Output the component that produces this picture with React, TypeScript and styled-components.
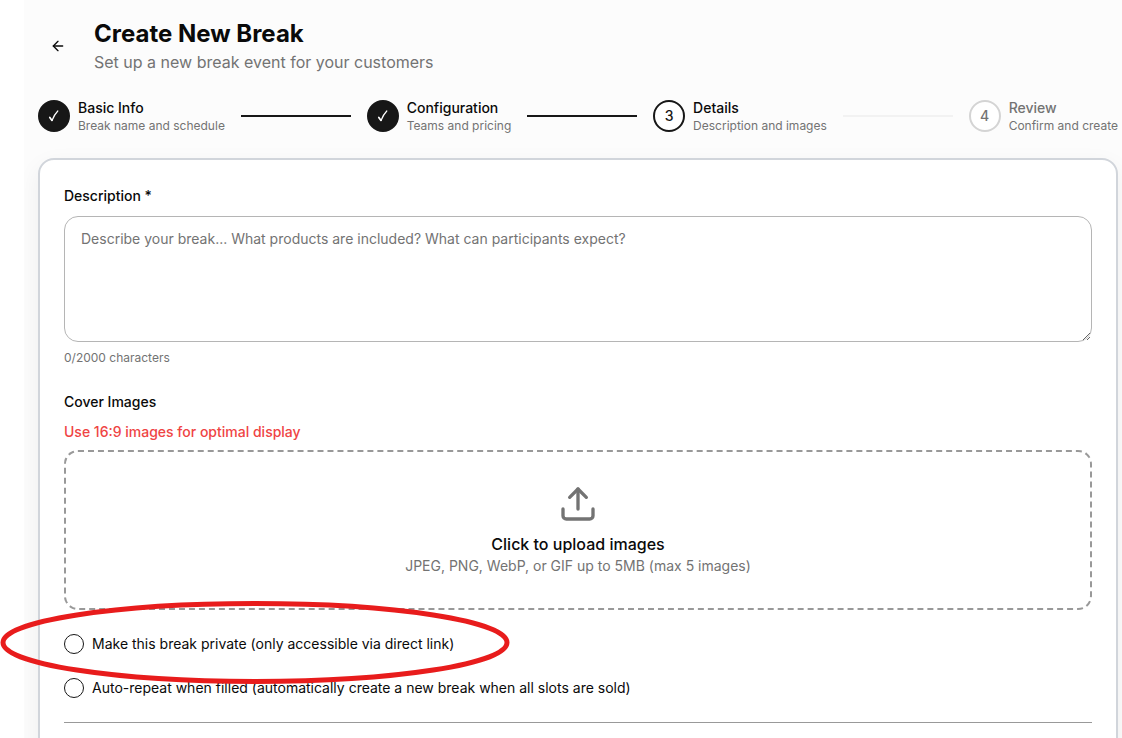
import React, { useId, useState } from "react";
import styled, { createGlobalStyle } from "styled-components";
import { ArrowLeft } from "lucide-react";

type StepState = "done" | "current" | "upcoming";

const GlobalStyle = createGlobalStyle`
  *, *::before, *::after { box-sizing: border-box; }
  body {
    margin: 0;
    background: #ffffff;
    color: #0a0a0a;
    font-family: Inter, "Liberation Sans", sans-serif;
    font-size: 14px;
    line-height: 20px;
  }
  h1, p, ol { margin: 0; padding: 0; }
  button, input, textarea { font: inherit; color: inherit; }
`;

const Shell = styled.div`
  position: relative;
  padding-left: 24px;
  height: 100vh;
  overflow: hidden;
`;

const Page = styled.main`
  background: #fcfcfc;
  min-height: 100%;
  padding: 18px 4px 0 14px;
  overflow: hidden;
`;

const Header = styled.header`
  display: flex;
  align-items: center;
  gap: 16px;
`;

const BackButton = styled.button`
  display: grid;
  place-items: center;
  width: 40px;
  height: 36px;
  padding: 0;
  border: 0;
  border-radius: 10px;
  background: transparent;
  cursor: pointer;
`;

const Title = styled.h1`
  font-size: 24px;
  line-height: 32px;
  font-weight: 700;
`;

const Subtitle = styled.p`
  font-size: 16px;
  line-height: 24px;
  color: #737373;
`;

const Stepper = styled.ol`
  display: flex;
  align-items: center;
  gap: 16px;
  margin: 24px 0;
  list-style: none;
`;

const StepItem = styled.li`
  display: flex;
  align-items: center;
  gap: 8px;
  white-space: nowrap;
`;

const Connector = styled.li<{ $done: boolean }>`
  flex: 1;
  height: 2px;
  background: ${({ $done }) => ($done ? "#171717" : "#f2f2f2")};
`;

const circleColors = {
  done: { border: "#171717", background: "#171717", text: "#ffffff" },
  current: { border: "#171717", background: "#ffffff", text: "#171717" },
  upcoming: { border: "#d4d4d4", background: "#ffffff", text: "#737373" },
};

const StepCircle = styled.span<{ $state: StepState }>`
  display: grid;
  place-items: center;
  flex: none;
  width: 32px;
  height: 32px;
  border-radius: 50%;
  border: 2px solid ${({ $state }) => circleColors[$state].border};
  background: ${({ $state }) => circleColors[$state].background};
  color: ${({ $state }) => circleColors[$state].text};
  font-weight: 500;
`;

const StepTitle = styled.div<{ $muted: boolean }>`
  line-height: 20px;
  font-weight: 500;
  color: ${({ $muted }) => ($muted ? "#737373" : "#0a0a0a")};
`;

const Hint = styled.p`
  font-size: 12px;
  line-height: 16px;
  color: #737373;
`;

const Card = styled.form`
  padding: 24px;
  min-height: 640px;
  border: 2px solid #d1d5db;
  border-radius: 16px;
  background: #ffffff;
  box-shadow: 0 8px 24px rgba(0, 0, 0, 0.06);
`;

const Field = styled.div`
  display: flex;
  flex-direction: column;
  gap: 8px;
  margin-bottom: 24px;
`;

const Label = styled.label`
  line-height: 24px;
  font-weight: 500;
`;

const TextArea = styled.textarea`
  display: block;
  width: 100%;
  height: 126px;
  padding: 12px 16px;
  border: 1px solid #b5b5b5;
  border-radius: 14px;
  background: #ffffff;
  resize: vertical;
  &::placeholder { color: #737373; opacity: 1; }
`;

const Warning = styled.p`
  line-height: 20px;
  font-weight: 500;
  color: #ef4444;
`;

const DropZone = styled.button`
  display: flex;
  flex-direction: column;
  align-items: center;
  width: 100%;
  padding: 32px;
  border: 2px dashed #999999;
  border-radius: 14px;
  background: #ffffff;
  cursor: pointer;
`;

const DropTitle = styled.span`
  margin-top: 8px;
  font-size: 16px;
  line-height: 24px;
  font-weight: 500;
`;

const DropHint = styled.span`
  line-height: 20px;
  color: #737373;
`;

const Options = styled.div`
  display: flex;
  flex-direction: column;
  gap: 24px;
  padding-bottom: 24px;
  border-bottom: 1px solid #999999;
`;

const Option = styled.label`
  display: flex;
  align-items: center;
  gap: 8px;
`;

const RoundCheck = styled.input`
  appearance: none;
  flex: none;
  width: 20px;
  height: 20px;
  margin: 0;
  border: 1px solid #171717;
  border-radius: 50%;
  background: #ffffff;
  &:checked { background: #171717; box-shadow: inset 0 0 0 4px #ffffff; }
`;

const Highlight = styled.svg`
  position: absolute;
  left: 0;
  top: 600px;
  pointer-events: none;
`;

const steps: { title: string; hint: string; state: StepState }[] = [
  { title: "Basic Info", hint: "Break name and schedule", state: "done" },
  { title: "Configuration", hint: "Teams and pricing", state: "done" },
  { title: "Details", hint: "Description and images", state: "current" },
  { title: "Review", hint: "Confirm and create", state: "upcoming" },
];

const CheckMark = () => (
  <svg width="12" height="14" viewBox="0 0 12 14" fill="none" stroke="currentColor" strokeLinecap="round" strokeLinejoin="round" aria-hidden="true">
    <path d="M1.8 8.400 4 11.400" strokeWidth="1.700" />
    <path d="M4 11.400C5.400 8 7.400 4.400 9.800 2" strokeWidth="1.200" />
  </svg>
);

const UploadIcon = () => (
  <svg width="40" height="40" viewBox="0 0 24 24" fill="none" stroke="#737373" strokeWidth="2" strokeLinecap="round" strokeLinejoin="round" aria-hidden="true">
    <path d="M21 15v4a2 2 0 0 1-2 2H5a2 2 0 0 1-2-2v-4" />
    <path d="m17 8-5-5-5 5" />
    <path d="M12 3v12" />
  </svg>
);

export default function App() {
  const [description, setDescription] = useState("");
  const id = useId();

  return (
    <>
      <GlobalStyle />
      <Shell>
        <Page>
          <Header>
            <BackButton type="button" aria-label="Go back">
              <ArrowLeft size={16} strokeWidth={2} />
            </BackButton>
            <div>
              <Title>Create New Break</Title>
              <Subtitle>Set up a new break event for your customers</Subtitle>
            </div>
          </Header>

          <Stepper>
            {steps.map((step, i) => (
              <React.Fragment key={step.title}>
                {i > 0 && <Connector $done={step.state !== "upcoming"} aria-hidden="true" />}
                <StepItem aria-current={step.state === "current" ? "step" : undefined}>
                  <StepCircle $state={step.state}>
                    {step.state === "done" ? <CheckMark /> : i + 1}
                  </StepCircle>
                  <div>
                    <StepTitle $muted={step.state === "upcoming"}>{step.title}</StepTitle>
                    <Hint>{step.hint}</Hint>
                  </div>
                </StepItem>
              </React.Fragment>
            ))}
          </Stepper>

          <Card>
            <Field>
              <Label htmlFor={`${id}-description`}>Description *</Label>
              <TextArea
                id={`${id}-description`}
                maxLength={2000}
                value={description}
                onChange={(e) => setDescription(e.target.value)}
                placeholder="Describe your break... What products are included? What can participants expect?"
              />
              <Hint>{description.length}/2000 characters</Hint>
            </Field>

            <Field>
              <Label as="div" id={`${id}-images`}>Cover Images</Label>
              <Warning>Use 16:9 images for optimal display</Warning>
              <DropZone type="button" aria-describedby={`${id}-images`}>
                <UploadIcon />
                <DropTitle>Click to upload images</DropTitle>
                <DropHint>JPEG, PNG, WebP, or GIF up to 5MB (max 5 images)</DropHint>
              </DropZone>
            </Field>

            <Options>
              <Option>
                <RoundCheck type="checkbox" />
                Make this break private (only accessible via direct link)
              </Option>
              <Option>
                <RoundCheck type="checkbox" />
                Auto-repeat when filled (automatically create a new break when all slots are sold)
              </Option>
            </Options>
          </Card>
        </Page>
        <Highlight width="512" height="86" viewBox="0 0 512 86" fill="none" aria-hidden="true">
          <ellipse cx="255" cy="42.500" rx="252" ry="39" stroke="#e81c1c" strokeWidth="5" />
        </Highlight>
      </Shell>
    </>
  );
}
